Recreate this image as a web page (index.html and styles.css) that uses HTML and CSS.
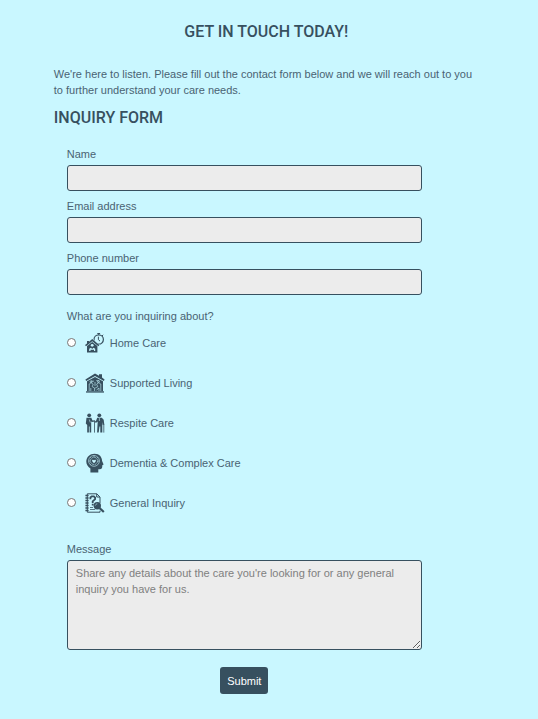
FILE: index.html
```html
<!DOCTYPE html>
<html lang="en">
<head>
<meta charset="utf-8">
<meta name="viewport" content="width=device-width, initial-scale=1">
<title>Get in touch</title>
<link rel="stylesheet" href="styles.css">
</head>
<body>
<main class="contact">
  <h1 class="heading page-title">GET IN TOUCH TODAY!</h1>
  <p class="intro">We're here to listen. Please fill out the contact form below and we will reach out to you to further understand your care needs.</p>
  <h2 class="heading">INQUIRY FORM</h2>
  <form class="form">
    <div class="field">
      <label for="name">Name</label>
      <input class="control" id="name" type="text">
    </div>
    <div class="field">
      <label for="email">Email address</label>
      <input class="control" id="email" type="email">
    </div>
    <div class="field">
      <label for="phone">Phone number</label>
      <input class="control" id="phone" type="tel">
    </div>
    <fieldset class="options">
      <legend>What are you inquiring about?</legend>
      <label class="option">
        <input type="radio" name="topic" value="home">
        <svg class="icon" viewBox="0 0 20 20" aria-hidden="true">
          <circle cx="13.7" cy="6.5" r="4.7" fill="none" stroke="currentColor" stroke-width="1.2"/>
          <path d="M13.7 1.8V.3M12.3.5h2.8M17 3l1.200-1.200M13.400 3.700v3l1.600 1.400" fill="none" stroke="currentColor" stroke-width="1"/>
          <path class="knock" d="M7.2 5.4 15 12v2H0v-2z"/>
          <path d="M7.2 6 14.400 12l-1 1.300-6.200-5-6.200 5L0 12l2-1.600V8h2v.8z"/>
          <path d="m7.2 9 5.200 4v6.600H2V13z"/>
          <circle class="knock" cx="7.2" cy="12.3" r="1.400"/>
          <path class="knock" d="M4.200 18v-2.200l1.800-1 1.200 1.200 1.200-1.200 1.800 1V18H9v-1.200H5.500V18z"/>
        </svg>
        <span>Home Care</span>
      </label>
      <label class="option">
        <input type="radio" name="topic" value="supported">
        <svg class="icon" viewBox="0 0 20 20" aria-hidden="true">
          <path d="M10 .5 14 2.700V1.300h3v3.200l2.600 1.900-.7 1.500L10 3 1.100 7.900.4 6.400z"/>
          <path d="m10 4 8 4.300v10H2v-10z"/>
          <path d="M1 18.300h18v1.300H1z"/>
          <path class="knock-line" d="M4.200 18V11l2-1.300 2 1.500-1 2.500 2.400 1.300V18M5.800 18v-3M15.800 18v-7l-2.200-1.300-2 1.500 1.200 2.500-2.600 1.300M14 18v-3l-2.500 2M6 8.200h3M11.300 7.500l3 .5M10 9v4"/>
          <circle class="knock-line" cx="6.100" cy="8.800" r="1"/>
          <circle class="knock-line" cx="13.400" cy="8.600" r="1"/>
        </svg>
        <span>Supported Living</span>
      </label>
      <label class="option">
        <input type="radio" name="topic" value="respite">
        <svg class="icon" viewBox="0 0 20 20" aria-hidden="true">
          <circle cx="4.200" cy="2.300" r="1.900"/>
          <path d="M1.500 4.800h4.800l1.200 2.600 2.600-.2v1.400l-3.300.4-.6-.8v11.400H4.600v-6h-.7v6H2.200V12L.8 10.500z"/>
          <circle cx="14.300" cy="2.300" r="1.900"/>
          <path d="M12.200 4.800h4.600l1.900 2 .6 4.800-1.500.4-.5-3v10.600h-2v-6h-.8l-.8 6h-1.600l.6-11-1.600 1.200-2-.7.4-1.200 1.400.3z"/>
          <path d="M9.500 8.800v10.800M18.800 11v8.600" fill="none" stroke="currentColor" stroke-width=".8"/>
          <path class="knock-line" d="m4.300 6.500 1 3M14.400 5v3"/>
        </svg>
        <span>Respite Care</span>
      </label>
      <label class="option">
        <input type="radio" name="topic" value="dementia">
        <svg class="icon" viewBox="0 0 20 20" aria-hidden="true">
          <path d="M9.500.7c5 0 7.500 3.200 7.600 7.200l1.500 3.600-1.300.8c0 3-.3 4.200-4 4v3.100H5.400v-4C2.700 13.600 1.300 11.200 1.300 8.500 1.300 4 5 .7 9.500.7z"/>
          <circle class="knock-line" cx="9" cy="7.900" r="5.400"/>
          <circle class="knock-line" cx="9" cy="7.900" r="3.600" stroke-dasharray="2 .8"/>
          <path class="knock" d="M9 10.300 7.200 8.300c-.6-1.300 1-2.200 1.800-.9.800-1.300 2.400-.4 1.800.9z"/>
          <path class="knock-line" d="M9 2.500v1.700M3.700 8h1.600M12.700 8h1.600M5.300 4.300l1 1M12.700 4.300l-1 1M5.300 11.600l1-1"/>
        </svg>
        <span>Dementia &amp; Complex Care</span>
      </label>
      <label class="option">
        <input type="radio" name="topic" value="general">
        <svg class="icon" viewBox="0 0 20 20" aria-hidden="true">
          <path d="M2.300.8h9.500L15 4v6M2.300.8v18.400H15v-1.500M11.700.8V4H15" fill="none" stroke="currentColor" stroke-width="1"/>
          <path d="M.4 2.500h3.200M.4 5h3.200M.4 7.500h3.200M.4 10h3.200M.4 12.500h3.200M.4 15h3.200M.4 17.500h3.200" fill="none" stroke="currentColor" stroke-width="1.400"/>
          <path d="M5.400 6.200V4.500l1.300-1.200h2.200l1.200 1.200v1.700L7.700 8.300V10" fill="none" stroke="currentColor" stroke-width="1.800"/>
          <path d="M6.800 10.800h1.800v1.700H6.800zM5 14h3v.8H5zM5 16.200h5v.8H5z"/>
          <circle cx="12.300" cy="12.800" r="3.700"/>
          <path d="m14.500 15 4.300 4" fill="none" stroke="currentColor" stroke-width="2.200"/>
          <path class="knock-line" d="M10.300 12.600c.2-1 1-1.700 2-1.800"/>
        </svg>
        <span>General Inquiry</span>
      </label>
    </fieldset>
    <div class="field">
      <label for="message">Message</label>
      <textarea class="control message" id="message" placeholder="Share any details about the care you're looking for or any general inquiry you have for us."></textarea>
    </div>
    <button class="submit" type="submit">Submit</button>
  </form>
</main>
</body>
</html>
```
FILE: styles.css
```css
:root {
  --page: #c9f7ff;
  --ink: #37505f;
  --text: #4a6373;
  --field: #ececec;
}

* {
  box-sizing: border-box;
}

body {
  margin: 0;
  background: var(--page);
  color: var(--text);
  font: 11px/16px "Liberation Sans", Arial, sans-serif;
}

.contact {
  padding: 20px 11% 24px 10%;
}

.heading {
  margin: 0;
  color: var(--ink);
  font-family: Roboto, "Liberation Sans", sans-serif;
  font-size: 16px;
  font-weight: 500;
  line-height: 24px;
}

.page-title {
  margin-bottom: 22px;
  text-align: center;
}

.intro {
  margin: 0 0 8px;
}

.form {
  display: flex;
  flex-direction: column;
  width: 355px;
  max-width: 100%;
  margin: 16px 0 0 13px;
}

.field {
  display: flex;
  flex-direction: column;
  gap: 3px;
  margin-bottom: 7px;
}

.control {
  width: 100%;
  height: 26px;
  padding: 4px 8px;
  border: 1px solid var(--ink);
  border-radius: 3px;
  background: var(--field);
  color: var(--ink);
  font: inherit;
}

.message {
  height: 90px;
  resize: vertical;
}

.control::placeholder {
  color: #808080;
}

.options {
  margin: 6px 0 18px;
  padding: 0;
  border: 0;
}

.options legend {
  padding: 0;
}

.option {
  display: flex;
  align-items: center;
  height: 40px;
}

.option:first-of-type {
  margin-top: -1px;
}

.option input {
  appearance: none;
  width: 9px;
  height: 9px;
  margin: 0 9px 2px 0;
  border: 1px solid #767676;
  border-radius: 50%;
  background: #fff;
}

.option input:checked {
  background: var(--ink);
}

.icon {
  width: 20px;
  height: 20px;
  margin-right: 5px;
  color: var(--ink);
  fill: currentColor;
}

.knock {
  fill: var(--page);
}

.knock-line {
  fill: none;
  stroke: var(--page);
  stroke-width: 0.6;
}

.submit {
  align-self: center;
  height: 27px;
  margin-top: 10px;
  padding: 0 7px;
  border: 0;
  border-radius: 3px;
  background: var(--ink);
  color: #fff;
  font: inherit;
}
```
